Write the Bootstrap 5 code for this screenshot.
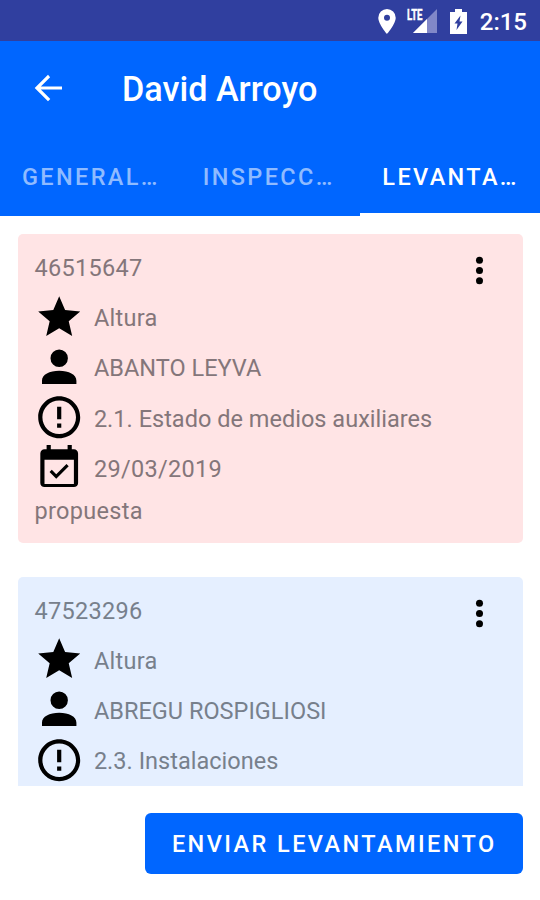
<!DOCTYPE html>
<html lang="es">
<head>
<meta charset="utf-8">
<meta name="viewport" content="width=device-width, initial-scale=1">
<title>David Arroyo</title>
<link href="https://cdn.jsdelivr.net/npm/bootstrap@5.3.0/dist/css/bootstrap.min.css" rel="stylesheet">
<style>
  body { font-family: Roboto, "Liberation Sans", sans-serif; height: 900px; }
  svg { display: block; flex: none; overflow: visible; }
  .status-bar { height: 41px; background: #303f9f; padding: 2px 13px 0 0; font-size: 24px; line-height: 1; font-weight: 500; }
  .battery { margin: 0 13px 0 12px; }
  .app-bar { height: 175px; background: #06f; }
  .title-row { height: 95px; padding-left: 27px; }
  .title-row svg { margin-top: -1px; }
  .title-text { font-size: 34.2px; font-weight: 500; line-height: 1; margin-left: 53px; padding-top: 2px; }
  .tab-row { height: 80px; }
  .tab-row .nav-link { height: 80px; padding: 0 18px 0 22px; font-size: 23.5px; font-weight: 500; letter-spacing: 2.35px; color: #8fbbff; border-radius: 0; border-bottom: 3px solid transparent; line-height: 82px; text-align: left; }
  .tab-row .nav-link:nth-child(2) { padding-left: 23px; }
  .tab-row .nav-link.active { color: #fff; border-bottom-color: #fff; }
  .record-list { height: 569.5px; padding: 18px 17px 0 17.5px; }
  .record { border: 0; border-radius: 5px; height: 308.5px; padding: 0 17px; font-size: 23.5px; line-height: 28px; letter-spacing: .3px; margin-bottom: 34px; }
  .record-open { background: #ffe4e5; color: #84767a; }
  .record-sent { background: #e5efff; color: #77808c; }
  .record-head { height: 57.6px; padding-top: 20px; }
  .record-head svg { margin: -4px 6px 0 0; }
  .record-line { height: 50.4px; }
  .record-line span { margin-left: 9.7px; padding-top: 2.5px; }
  .record-line .record-name { letter-spacing: .02px; }
  .record-line svg { color: #000; margin-left: -.7px; }
  .record-note { padding-top: 4px; }
  .page-actions { padding: 27.5px 17px 0 0; }
  .send-btn { background: #06f; border: 0; border-radius: 6px; width: 378.5px; height: 60.5px; padding: 2px 0 0 1px; font-size: 23.5px; font-weight: 500; letter-spacing: 2.42px; }
</style>
</head>
<body class="bg-white overflow-hidden d-flex flex-column">
<svg class="d-none">
  <symbol id="i-star" viewBox="0 0 24 24"><path d="M12 17.27L18.18 21l-1.64-7.03L22 9.24l-7.19-.61L12 2 9.19 8.63 2 9.24l5.46 4.73L5.82 21z"/></symbol>
  <symbol id="i-person" viewBox="0 0 24 24"><path d="M12 3.6a4.15 4.15 0 1 0 0 8.3 4.15 4.15 0 0 0 0-8.3zM3.8 20v-1.6c0-2.9 3.6-4.7 8.2-4.7s8.2 1.8 8.2 4.7V20z"/></symbol>
  <symbol id="i-error" viewBox="0 0 24 24"><path d="M11 15h2v2h-2zm0-8h2v6h-2zm.99-5C6.47 2 2 6.48 2 12s4.47 10 9.99 10C17.52 22 22 17.52 22 12S17.52 2 11.99 2zM12 20c-4.42 0-8-3.58-8-8s3.58-8 8-8 8 3.58 8 8-3.58 8-8 8z"/></symbol>
  <symbol id="i-event" viewBox="0 0 24 24"><path d="M16.53 11.06L15.47 10l-4.88 4.88-2.12-2.12-1.06 1.06L10.59 17l5.94-5.94zM19 3h-1V1h-2v2H8V1H6v2H5c-1.11 0-1.99.9-1.99 2L3 19c0 1.1.89 2 2 2h14c1.1 0 2-.9 2-2V5c0-1.1-.9-2-2-2zm0 16.500H5V8h14v11.500z"/></symbol>
  <symbol id="i-more" viewBox="0 0 24 24"><circle cx="12" cy="6" r="2.05"/><circle cx="12" cy="12" r="2.05"/><circle cx="12" cy="18" r="2.05"/></symbol>
</svg>

<header class="text-white flex-shrink-0">
  <div class="status-bar d-flex align-items-center justify-content-end">
    <svg width="18" height="25" viewBox="0 0 18 25" fill="#fff"><path fill-rule="evenodd" d="M9 0a8.700 8.700 0 0 0-8.700 8.700C.3 15 9 25 9 25s8.700-10 8.700-16.300A8.700 8.700 0 0 0 9 0zm0 5.700a3 3 0 1 1 0 6 3 3 0 0 1 0-6z"/></svg>
    <svg class="ms-2" width="34" height="26" viewBox="0 0 34 26"><path d="M33 0v24H9z" fill="#8188c8"/><path d="M23 10V24H9z" fill="#fff"/><text x="3" y="10.500" font-size="14" font-weight="700" fill="#fff" stroke="#fff" stroke-width=".4" textLength="15.500" lengthAdjust="spacingAndGlyphs">LTE</text></svg>
    <svg class="battery" width="17" height="26" viewBox="0 0 17 26"><path fill="#fff" fill-rule="evenodd" d="M5 0h7v3h5v22H0V3h5zM10.500 6.500L4.500 14.500h3L6.500 21 12.500 12.500h-3z"/></svg>
    <span>2:15</span>
  </div>
  <div class="app-bar">
    <div class="title-row d-flex align-items-center">
      <svg width="42" height="42" viewBox="0 0 24 24" fill="#fff"><path d="M20 11.100H7.900l5.300-5.300L12 4.400 4.400 12l7.600 7.600 1.300-1.300-5.400-5.400H20z"/></svg>
      <h1 class="title-text mb-0">David Arroyo</h1>
    </div>
    <nav class="tab-row nav nav-justified flex-nowrap">
      <a class="nav-link col-4 text-nowrap" href="#">GENERAL…</a>
      <a class="nav-link col-4 text-nowrap" href="#">INSPECC…</a>
      <a class="nav-link col-4 text-nowrap active" href="#">LEVANTA…</a>
    </nav>
  </div>
</header>

<main class="record-list overflow-hidden flex-shrink-0">
  <article class="record card record-open">
    <div class="record-head d-flex justify-content-between"><span>46515647</span><svg width="41" height="41" fill="#000"><use href="#i-more"/></svg></div>
    <div class="record-line d-flex align-items-center"><svg width="50.400" height="50.400"><use href="#i-star"/></svg><span>Altura</span></div>
    <div class="record-line d-flex align-items-center"><svg width="50.400" height="50.400"><use href="#i-person"/></svg><span class="record-name">ABANTO LEYVA</span></div>
    <div class="record-line d-flex align-items-center"><svg width="50.400" height="50.400"><use href="#i-error"/></svg><span class="record-name">2.1. Estado de medios auxiliares</span></div>
    <div class="record-line d-flex align-items-center"><svg width="50.400" height="50.400"><use href="#i-event"/></svg><span>29/03/2019</span></div>
    <div class="record-note">propuesta</div>
  </article>
  <article class="record card record-sent">
    <div class="record-head d-flex justify-content-between"><span>47523296</span><svg width="41" height="41" fill="#000"><use href="#i-more"/></svg></div>
    <div class="record-line d-flex align-items-center"><svg width="50.400" height="50.400"><use href="#i-star"/></svg><span>Altura</span></div>
    <div class="record-line d-flex align-items-center"><svg width="50.400" height="50.400"><use href="#i-person"/></svg><span class="record-name">ABREGU ROSPIGLIOSI</span></div>
    <div class="record-line d-flex align-items-center"><svg width="50.400" height="50.400"><use href="#i-error"/></svg><span class="record-name">2.3. Instalaciones</span></div>
  </article>
</main>

<footer class="page-actions flex-grow-1 d-flex justify-content-end align-items-start">
  <button class="btn btn-primary send-btn" type="button">ENVIAR LEVANTAMIENTO</button>
</footer>
<script src="https://cdn.jsdelivr.net/npm/bootstrap@5.3.0/dist/js/bootstrap.bundle.min.js"></script>
</body>
</html>
